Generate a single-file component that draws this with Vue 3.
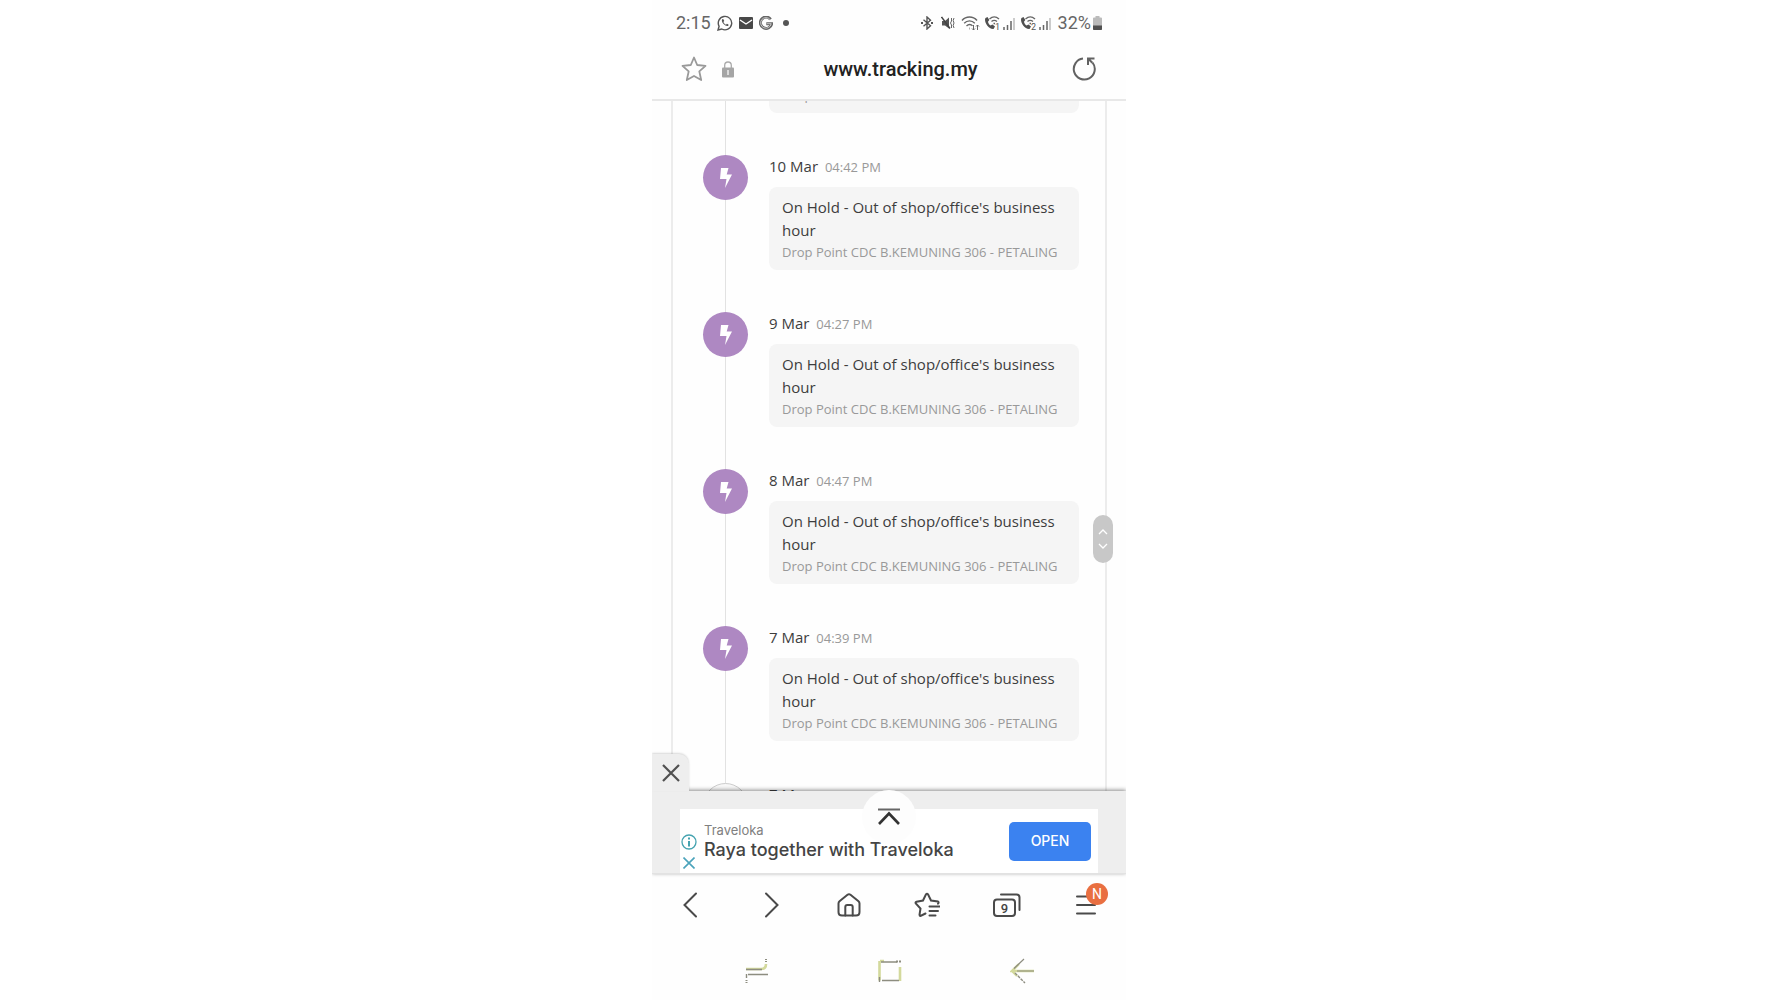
<script setup>
const message = "On Hold - Out of shop/office's business hour"
const place = 'Drop Point CDC B.KEMUNING 306 - PETALING'

const events = [
  { date: '10 Mar', time: '04:42 PM' },
  { date: '9 Mar', time: '04:27 PM' },
  { date: '8 Mar', time: '04:47 PM' },
  { date: '7 Mar', time: '04:39 PM' },
]
</script>

<template>
  <div class="phone">
    <header class="status">
      <div class="status-side">
        <span class="clock">2:15</span>
        <svg width="16" height="16" viewBox="0 0 16 16" fill="none" stroke="#555" stroke-width="1.4">
          <path d="M1 15l1.1-3.7A6.7 6.7 0 1 1 4.8 14z" />
          <path d="M5.3 4.2c-1 1-.4 3 1.300 4.800s3.800 2.600 4.800 1.500c.5-.6.300-.9-1.500-1.700l-.9.9C7.800 9.200 6.800 8.200 6.400 7l.8-.9c-.6-1.800-1.200-2.300-1.900-1.900z" fill="#555" stroke="none" />
        </svg>
        <svg width="14" height="12" viewBox="0 0 14 12">
          <rect width="14" height="12" rx="1" fill="#484848" />
          <path d="M1 3l6 4 6-4" fill="none" stroke="#fff" stroke-width="1.400" />
        </svg>
        <svg width="14" height="15" viewBox="0 0 14 15" fill="none">
          <path d="M11.600 3.300A5.700 5.700 0 1 0 12.700 7.700H7.300" stroke="#666" stroke-width="3" />
          <path d="M11.200 3.700A5.300 5.300 0 1 0 12.200 7.700H7.800" stroke="#ddd" stroke-width=".8" />
        </svg>
        <span class="more-dot"></span>
      </div>
      <div class="status-side status-right">
        <svg width="12" height="14" viewBox="0 0 12 14" fill="none" stroke="#555" stroke-width="1.400">
          <path d="M2.500 3.800l7 6L6 13V1l3.500 3.200-7 6" />
          <path d="M0 7h2M10 7h2" stroke-width="2" />
        </svg>
        <svg class="mute" width="14" height="14" viewBox="0 0 14 14">
          <path d="M1 5h3l4-3.500v11L4 9.500H1z" fill="#555" />
          <path d="M.5 1l8.500 11.500" stroke="#444" stroke-width="1.500" />
          <path d="M10.500 2v3l-1 2 1 2v3M13 2l-.8 2.500.8 2.500-.8 2.500.8 2.500" fill="none" stroke="#666" />
        </svg>
        <svg width="19" height="15" viewBox="0 0 19 15" fill="none" stroke="#666" stroke-width="1.400">
          <path d="M1 4.500C5-.2 12-.2 16 4.500M3.200 7.300c3-3.300 7.600-3.300 10.600 0M5.500 9.900c2-1.900 4.500-1.900 6 0" />
          <path d="M8.500 12.500h.5" stroke-width="2" />
          <path d="M12.500 9v5M11 12.500l1.500 1.500 1.500-1.500M16.500 14V9M15 10.500L16.500 9l1.500 1.500" stroke-width="1" />
        </svg>
        <svg v-for="n in 2" :key="n" class="call" width="32" height="15" viewBox="0 0 32 15">
          <path d="M1.500 2C-.5 5 4 13.500 9.500 13l1.500-2.500-2.500-2-2 1C5 8.500 4.300 7.200 4 5.700L5.300 4 3.500 1z" fill="#505050" />
          <path d="M5.500 3c3-2.700 6.500-2.700 9.500 0M7.500 5.500c2-1.600 3.500-1.600 5.500 0M9.500 7.500h1.500" fill="none" stroke="#666" stroke-width="1.400" />
          <text x="11" y="14" font-size="9" fill="#555">{{ n }}</text>
          <path d="M20 11v3M23.500 9v5M27 5v9" stroke="#666" stroke-width="1.500" />
          <path d="M30 2v12" stroke="#bbb" stroke-width="1.500" />
        </svg>
        <span class="clock">32%</span>
        <svg class="battery" width="9" height="14" viewBox="0 0 9 14">
          <path d="M2.500 0h4v1.500H8q1 0 1 1V14H0V2.500q0-1 1-1h1.500z" fill="#bbb" />
          <path d="M0 9.500h9V13q0 1-1 1H1q-1 0-1-1z" fill="#505050" />
        </svg>
      </div>
    </header>

    <div class="address">
      <div class="address-side">
        <button class="icon-btn" aria-label="Bookmark">
          <svg width="26" height="26" viewBox="0 0 26 26" fill="none" stroke="#999" stroke-width="1.800" stroke-linejoin="round">
            <path d="M13 1.500l3.200 7.500 8.300.8-6.200 5.600 1.900 8.600-7.200-4-7.200 4 1.900-8.600L1.500 9.800 9.800 9z" />
          </svg>
        </button>
        <svg width="12" height="17" viewBox="0 0 12 17">
          <path d="M2.700 8V4.300a3.300 3.300 0 0 1 6.600 0V8" fill="none" stroke="#aaa" stroke-width="1.300" />
          <rect y="6.500" width="12" height="10" rx="1" fill="#a5a5a5" />
          <path d="M6 9v5" stroke="#eee" stroke-width="1.500" />
        </svg>
      </div>
      <span class="url">www.tracking.my</span>
      <button class="icon-btn" aria-label="Reload">
        <svg width="24" height="24" viewBox="0 0 24 24" fill="none" stroke="#626262" stroke-width="2">
          <path d="M11 1.600A10.500 10.500 0 1 0 20.500 5.500" />
          <path d="M22.500 1.500H16V8M16.300 1.800l4 4" />
        </svg>
      </button>
    </div>

    <main class="feed">
      <div class="sheet">
        <ol class="timeline">
          <li class="event event-first">
            <div class="card"><p class="place">{{ place }}</p></div>
          </li>
          <li v-for="event in events" :key="event.date" class="event">
            <span class="marker">
              <svg width="14" height="22" viewBox="0 0 14 22" fill="#fff">
                <path d="M2 1h7.500L7.700 7.500H13L6 21l1.500-9H1z" />
              </svg>
            </span>
            <div class="body">
              <h2 class="when">{{ event.date }} <time>{{ event.time }}</time></h2>
              <div class="card">
                <p class="message">{{ message }}</p>
                <p class="place">{{ place }}</p>
              </div>
            </div>
          </li>
          <li class="event">
            <span class="marker marker-plain"></span>
            <div class="body"><h2 class="when">7 Mar</h2></div>
          </li>
        </ol>
      </div>
      <div class="scroll-handle">
        <svg width="10" height="22" viewBox="0 0 10 22" fill="none" stroke="#fff" stroke-width="1.300">
          <path d="M1 6l4-4 4 4M1 16l4 4 4-4" />
        </svg>
      </div>
    </main>

    <aside class="ad">
      <button class="ad-close" aria-label="Close">
        <svg width="18" height="18" viewBox="0 0 18 18" stroke="#505050" stroke-width="2.200">
          <path d="M1 1l16 16M17 1L1 17" />
        </svg>
      </button>
      <div class="ad-box">
        <div class="ad-marks">
          <svg width="16" height="16" viewBox="0 0 16 16" fill="none" stroke="#45a3b0">
            <circle cx="8" cy="8" r="7" stroke-width="1.300" />
            <path d="M8 3.500v2M8 7v5.500" stroke-width="2" />
          </svg>
          <svg width="12" height="12" viewBox="0 0 12 12" stroke="#4ba3bb" stroke-width="1.600">
            <path d="M.5.5l11 11M11.500.5L.5 11.500" />
          </svg>
        </div>
        <div class="ad-text">
          <span class="ad-brand">Traveloka</span>
          <span class="ad-title">Raya together with Traveloka</span>
        </div>
        <button class="open">OPEN</button>
      </div>
      <button class="to-top" aria-label="Back to top">
        <svg width="24" height="18" viewBox="0 0 24 18" fill="none" stroke="#333">
          <path d="M1 1.500h22" stroke="#666" stroke-width="2" />
          <path d="M2 16L12 5.500 22 16" stroke-width="2.600" />
        </svg>
      </button>
    </aside>

    <nav class="toolbar">
      <button class="icon-btn" aria-label="Back">
        <svg width="26" height="26" viewBox="0 0 26 26"><path d="M18 1.500L6.500 13 18 24.500" /></svg>
      </button>
      <button class="icon-btn" aria-label="Forward">
        <svg width="26" height="26" viewBox="0 0 26 26"><path d="M9 1.500L20.500 13 9 24.500" /></svg>
      </button>
      <button class="icon-btn" aria-label="Home">
        <svg width="26" height="26" viewBox="0 0 26 26">
          <path d="M2.500 11.500q0-1.500 1-2.300L11.500 2.700q1.500-1.100 3 0l8 6.500q1 .8 1 2.300V20q0 3.500-3.500 3.500H6q-3.500 0-3.500-3.500z" />
          <path d="M9.300 23.500V15q0-2 2-2h3.400q2 0 2 2v8.500" />
        </svg>
      </button>
      <button class="icon-btn" aria-label="Bookmarks">
        <svg width="26" height="26" viewBox="0 0 26 26">
          <path d="M11.500 21.500l-5 2.500q-1 0-1-1.200L6.500 16.500 1.800 11.500q-.8-1.500.7-1.800L9 8.500 12 2.300q1-1.300 2 0L17 8.500l7 1q1.200.8 0 2.200" />
          <path d="M15.500 14.500H26M15.500 19h8.500M15.500 23.500h6" />
        </svg>
      </button>
      <button class="icon-btn" aria-label="Tabs">
        <svg width="28" height="26" viewBox="0 0 28 26">
          <rect x="1" y="7.500" width="21" height="16.500" rx="3" />
          <path d="M8 2.500h15.500q3 0 3 3V18" />
          <text x="11.500" y="20.500" text-anchor="middle" class="tab-count">9</text>
        </svg>
      </button>
      <button class="icon-btn menu" aria-label="Menu">
        <svg width="26" height="26" viewBox="0 0 26 26"><path d="M3 4.500h18M3 13h18M3 21.500h18" /></svg>
        <span class="badge">N</span>
      </button>
    </nav>

    <nav class="system">
      <button class="icon-btn" aria-label="Recent apps">
        <svg width="26" height="28" viewBox="0 0 26 28" fill="none">
          <path d="M2 12h15q5 0 5-5" stroke="#d3d99c" stroke-width="2.600" />
          <path d="M2 12.500h16M4 17.500h20M2.500 17v4" stroke="#8d8d80" stroke-width="1.400" />
          <path d="M2.500 23v3M22 2v3" stroke="#8d8d80" stroke-width="2" stroke-dasharray="1 1" />
        </svg>
      </button>
      <button class="icon-btn" aria-label="Home screen">
        <svg width="26" height="28" viewBox="0 0 26 28" fill="none">
          <path d="M2.500 4v19.500M23 10v14M3 4h4" stroke="#d3d99c" stroke-width="2.600" />
          <path d="M4 5h16M5 23.500h17M2.500 20v5" stroke="#8d8d80" stroke-width="1.400" />
          <path d="M19 4.500h5" stroke="#8d8d80" stroke-width="2" stroke-dasharray="2 1" />
        </svg>
      </button>
      <button class="icon-btn" aria-label="System back">
        <svg width="26" height="28" viewBox="0 0 26 28" fill="none">
          <path d="M9 7l-7 7h22M2 14l5 5" stroke="#d3d99c" stroke-width="2.400" />
          <path d="M14 2L4 11.500M7 14h17" stroke="#8d8d80" stroke-width="1.200" />
          <path d="M5 16l10 10" stroke="#8d8d80" stroke-width="1.400" stroke-dasharray="3 1" />
        </svg>
      </button>
    </nav>
  </div>
</template>

<style>
body {
  background: #fff;
}
</style>

<style scoped>
.phone {
  display: flex;
  flex-direction: column;
  width: 100%;
  max-width: 474px;
  height: 100vh;
  margin: 0 auto;
  overflow: hidden;
  background: #fefefe;
  font-family: "Open Sans", "Noto Sans", sans-serif;
  color: #3d3d3d;
}

button {
  margin: 0;
  padding: 0;
  border: 0;
  background: none;
  font: inherit;
}

svg {
  display: block;
  flex: none;
}

.icon-btn {
  display: flex;
}

.status {
  display: flex;
  align-items: center;
  justify-content: space-between;
  height: 46px;
  padding: 0 24px;
  font-family: Roboto, sans-serif;
}

.status-side {
  display: flex;
  align-items: center;
  gap: 6px;
}

.clock {
  font-size: 18px;
  line-height: 20px;
  color: #666;
}

.mute {
  margin-left: 2px;
}

.call {
  margin-left: -2px;
}

.battery {
  margin-left: -4px;
}

.more-dot {
  width: 6px;
  height: 6px;
  margin-left: 4px;
  border-radius: 50%;
  background: #555;
}

.address {
  display: flex;
  align-items: center;
  justify-content: space-between;
  height: 55px;
  padding: 0 30px 7px 29px;
  box-sizing: border-box;
  border-bottom: 2px solid #e8e8e8;
}

.address-side {
  display: flex;
  align-items: center;
  gap: 15px;
}

.url {
  margin-right: 5px;
  font: 500 20px/24px Roboto, sans-serif;
  color: #222;
}

.feed {
  position: relative;
  display: flex;
  flex: 1;
  min-height: 0;
  padding: 0 19px;
}

.sheet {
  flex: 1;
  min-width: 0;
  overflow: hidden;
  border: solid #ececec;
  border-width: 0 2px;
}

.timeline {
  position: relative;
  margin: -19px 0 0;
  padding: 0 26px 0 30px;
  list-style: none;
}

.timeline::before {
  content: "";
  position: absolute;
  top: 0;
  bottom: 0;
  left: 52px;
  width: 1px;
  background: #e2e2e2;
}

.event {
  position: relative;
  display: flex;
  gap: 21px;
  padding-bottom: 42px;
}

.event-first {
  padding-left: 66px;
}

.event-first .card {
  flex: 1;
  padding-top: 3px;
}

.marker {
  display: flex;
  align-items: center;
  justify-content: center;
  flex: none;
  width: 45px;
  height: 45px;
  border-radius: 50%;
  background: #ae88c2;
}

.marker-plain {
  box-sizing: border-box;
  border: 1px solid #ccc;
  background: #f8f8f8;
}

.body {
  flex: 1;
  min-width: 0;
}

.when {
  margin: 0 0 10px;
  font-size: 15px;
  font-weight: 400;
  line-height: 22px;
}

.when time {
  margin-left: 3px;
  font-size: 13px;
  line-height: 16px;
  color: #999;
}

.card {
  padding: 9px 13px 8px;
  border-radius: 8px;
  background: #f5f5f5;
}

.message,
.place {
  margin: 0;
}

.message {
  font-size: 15px;
  line-height: 23px;
}

.place {
  font-size: 13px;
  line-height: 20px;
  color: #999;
  white-space: nowrap;
}

.scroll-handle {
  position: absolute;
  top: 60%;
  right: 13px;
  display: flex;
  align-items: center;
  justify-content: center;
  width: 20px;
  height: 48px;
  border-radius: 10px;
  background: #c8c8c8;
}

.ad {
  position: relative;
  padding: 18px 28px 0;
  border-bottom: 1px solid #e2e2e2;
  background: #eee;
  box-shadow: 0 -1px 4px rgba(0, 0, 0, 0.45);
}

.ad-close {
  position: absolute;
  left: 0;
  bottom: 100%;
  display: flex;
  align-items: center;
  justify-content: center;
  width: 37px;
  height: 37px;
  border-radius: 0 10px 0 0;
  background: #eee;
  box-shadow: 0 -1px 2px rgba(0, 0, 0, 0.15);
}

.ad-box {
  display: flex;
  align-items: center;
  gap: 7px;
  height: 64px;
  padding: 0 7px 0 1px;
  background: #fff;
}

.ad-marks {
  display: flex;
  flex-direction: column;
  align-items: center;
  gap: 7px;
  padding-top: 21px;
}

.ad-text {
  display: flex;
  flex: 1;
  flex-direction: column;
  font-family: Inter, sans-serif;
  white-space: nowrap;
}

.ad-brand {
  font-size: 13px;
  line-height: 18px;
  color: #808080;
}

.ad-title {
  font-size: 18px;
  font-weight: 500;
  line-height: 22px;
  color: #444;
}

.open {
  width: 82px;
  height: 39px;
  border-radius: 5px;
  background: #3b82f0;
  font: 500 14px/20px Inter, sans-serif;
  color: #fff;
}

.to-top {
  position: absolute;
  top: -1px;
  left: 50%;
  display: flex;
  justify-content: center;
  width: 54px;
  height: 54px;
  padding-top: 18px;
  border-radius: 50%;
  background: #fdfdfd;
  transform: translateX(-50%);
}

.toolbar {
  display: flex;
  align-items: center;
  justify-content: space-between;
  height: 62px;
  padding: 0 26px;
}

.toolbar svg {
  fill: none;
  stroke: #4a4a4a;
  stroke-width: 2;
  stroke-linecap: round;
}

.toolbar .tab-count {
  fill: #444;
  stroke: none;
  font: 500 13px Roboto, sans-serif;
}

.menu {
  position: relative;
}

.badge {
  position: absolute;
  top: -9px;
  right: -8px;
  width: 22px;
  height: 22px;
  border-radius: 50%;
  background: #e96f41;
  font: 400 14px/22px Roboto, sans-serif;
  color: #fff;
  text-align: center;
}

.system {
  display: flex;
  align-items: center;
  justify-content: space-between;
  height: 64px;
  padding: 6px 90px 0 92px;
  box-sizing: border-box;
}
</style>
